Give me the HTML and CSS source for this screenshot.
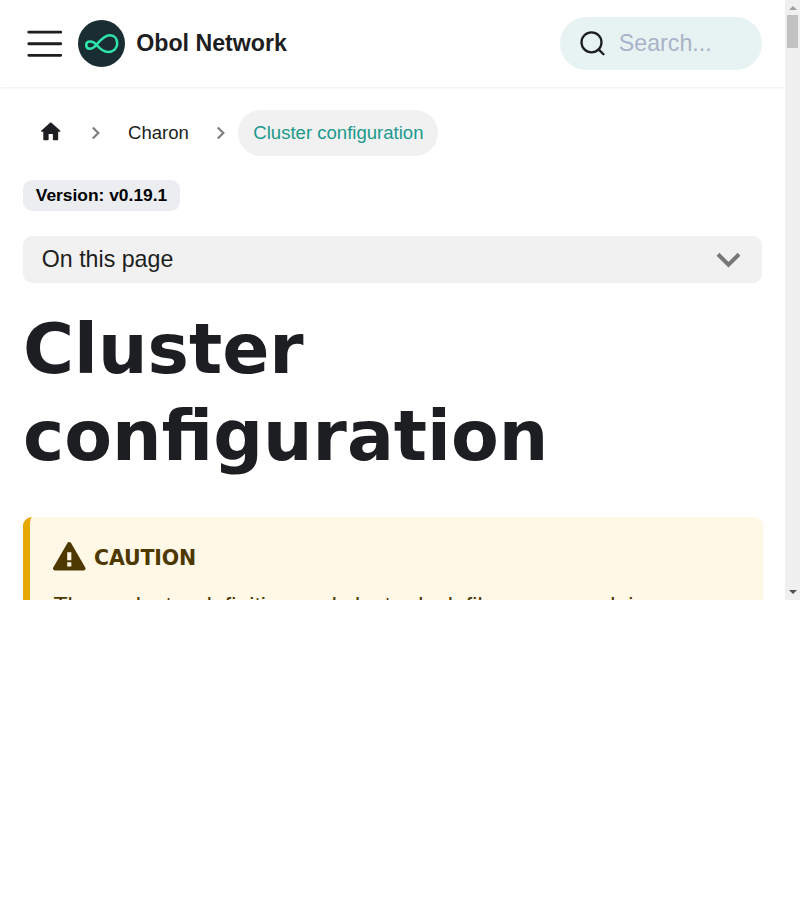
FILE: index.html
```html
<!DOCTYPE html>
<html lang="en">
<head>
<meta charset="utf-8">
<title>Cluster configuration | Obol Network</title>
<link rel="stylesheet" href="styles.css">
</head>
<body>
<div class="viewport">
  <div class="page">
    <nav class="navbar">
      <svg class="menu" viewBox="0 0 30 30" fill="none" stroke="currentColor" stroke-width="2" stroke-linecap="round"><path d="M4 7h22M4 15h22M4 23h22"/></svg>
      <svg class="logo" viewBox="0 0 47 47"><circle cx="23.5" cy="23.5" r="23.5" fill="#1a2d32"/><path d="M18.500 24.800C15 20.300 8.200 20.300 8.200 25C8.200 29.800 14 30.300 18.500 24.800C23 19.300 27 15.300 32 15.300C36.500 15.300 39.200 18.500 39.200 23.500C39.200 28.500 35.500 32 30 32C25 32 22 29 18.500 24.800Z" fill="none" stroke="#2fe4ab" stroke-width="2.500"/></svg>
      <b class="brand">Obol Network</b>
      <div class="search">
        <svg class="glass" viewBox="0 0 26 26" fill="none" stroke="currentColor" stroke-width="2.300" stroke-linecap="round"><circle cx="11.500" cy="11.300" r="10"/><path d="M18.600 18.400l4.900 4.900"/></svg>
        <span>Search...</span>
      </div>
    </nav>
    <main class="content">
      <ul class="crumbs">
        <li><a class="crumb"><svg class="home" viewBox="0 0 24 24"><path fill="currentColor" d="M10 19v-5h4v5c0 .55.45 1 1 1h3c.55 0 1-.45 1-1v-7h1.700c.46 0 .68-.57.33-.87L12.670 3.600c-.38-.34-.96-.34-1.340 0l-8.360 7.530c-.34.3-.13.87.33.87H5v7c0 .55.45 1 1 1h3c.55 0 1-.45 1-1z"/></svg></a></li>
        <li><svg class="sep" viewBox="0 0 12 14"><path d="M2.800 1.500l5.500 5.500l-5.500 5.500"/></svg><a class="crumb">Charon</a></li>
        <li><svg class="sep" viewBox="0 0 12 14"><path d="M2.800 1.500l5.500 5.500l-5.500 5.500"/></svg><a class="crumb active">Cluster configuration</a></li>
      </ul>
      <span class="badge">Version: v0.19.1</span>
      <div class="toc"><span>On this page</span><svg class="chevron" viewBox="0 0 24 16"><path d="M2 2.300L12.500 12.600L23 2.300"/></svg></div>
      <h1>Cluster configuration</h1>
      <section class="caution">
        <h5><svg class="warn" viewBox="0 0 16 16"><path fill="currentColor" fill-rule="evenodd" d="M8.893 1.500c-.183-.31-.52-.5-.887-.5s-.703.19-.886.500L.138 13.499a.98.98 0 0 0 0 1.001c.193.31.53.501.886.501h13.964c.367 0 .704-.19.877-.500a1.030 1.030 0 0 0 .010-1.002L8.893 1.500zm.133 11.497H6.987v-2.003h2.039v2.003zm0-3.004H6.987V5.987h2.039v4.006z"/></svg><span>caution</span></h5>
        <p>These cluster definition and cluster lock files are a work in</p>
      </section>
    </main>
  </div>
  <div class="scrollbar"><i class="up"></i><i class="thumb"></i><i class="down"></i></div>
</div>
</body>
</html>
```

FILE: styles.css
```css
* { box-sizing: border-box; }
body {
  margin: 0;
  background: #fff;
  color: #1c1e21;
  font: 23.2px/1.65 "Liberation Sans", Arial, sans-serif;
}
svg { display: block; flex: none; }
.viewport { display: flex; height: 600px; overflow: hidden; }
.page { flex: none; width: 785px; height: 600px; overflow: hidden; }
.navbar {
  display: flex;
  align-items: center;
  height: 87px;
  padding: 0 23.200px;
  box-shadow: 0 1px 2px rgba(0,0,0,.07);
}
.menu { width: 43.500px; height: 43.500px; margin-right: 11.500px; }
.logo { width: 47px; height: 47px; margin-right: 11px; }
.brand { line-height: 30px; margin-top: -2px; }
.search {
  display: flex;
  align-items: center;
  width: 202px;
  height: 53px;
  margin-left: auto;
  padding-left: 20px;
  border-radius: 27px;
  background: #e7f3f3;
  color: #a9b2c8;
}
.search span { line-height: 38px; margin-top: -2px; }
.glass { width: 26px; height: 26px; margin-right: 13px; color: #1c1e21; }
.content { padding: 23px 23px 0; }
.crumbs {
  display: flex;
  height: 46px;
  margin: 0 0 24px;
  padding: 0;
  list-style: none;
  font-size: 18.560px;
  line-height: 46px;
}
.crumbs li { display: flex; align-items: center; }
.crumb { display: block; height: 46px; padding: 0 15px; border-radius: 23px; }
.crumb.active { background: #f1f1f1; color: #1a998d; }
.home { width: 25.500px; height: 25.500px; margin-top: 9px; }
.sep {
  width: 12px;
  height: 14px;
  margin: 0 11px 0 11.500px;
  fill: none;
  stroke: #808080;
  stroke-width: 2.300;
}
.badge {
  display: block;
  width: 157px;
  height: 31px;
  border-radius: 9px;
  background: #ebedf0;
  color: #000;
  font-size: 17.400px;
  font-weight: bold;
  line-height: 31px;
  text-align: center;
}
.toc {
  display: flex;
  align-items: center;
  justify-content: space-between;
  height: 47px;
  margin-top: 25px;
  padding: 0 22px 0 18.800px;
  border-radius: 9px;
  background: #f1f1f1;
}
.chevron { width: 24px; height: 16px; overflow: visible; fill: none; stroke: #777; stroke-width: 4; }
h1 {
  margin: 22px 0 38px;
  font: bold 69.600px/87px "DejaVu Sans", sans-serif;
}
.caution {
  height: 200px;
  margin-right: -.8px;
  padding: 23px 23px 0 23.200px;
  border-left: 7px solid #e6a700;
  border-radius: 9px;
  background: #fff8e6;
  box-shadow: 0 1px 2px rgba(0,0,0,.07);
  color: #4d3800;
}
.caution h5 {
  display: flex;
  align-items: center;
  height: 34px;
  margin: 0 0 12.500px;
  font: bold 20.500px/34px "DejaVu Sans", sans-serif;
  letter-spacing: -.15px;
  text-transform: uppercase;
}
.caution h5 span { margin-top: 1px; }
.warn { width: 32.500px; height: 32.500px; margin: -2px 8.300px 0 0; }
.caution p { margin: 0 0 0 .2px; white-space: nowrap; }
.scrollbar {
  display: flex;
  flex-direction: column;
  align-items: center;
  width: 15px;
  height: 600px;
  padding: 6px 0;
  background: #f0f0f0;
}
.up, .down { border: 4px solid transparent; }
.up { border-top: 0; border-bottom-color: #a0a0a0; }
.down { margin-top: auto; border-bottom: 0; border-top-color: #505050; }
.thumb { width: 11px; height: 33px; margin-top: 5px; background: #c1c1c1; }
```
